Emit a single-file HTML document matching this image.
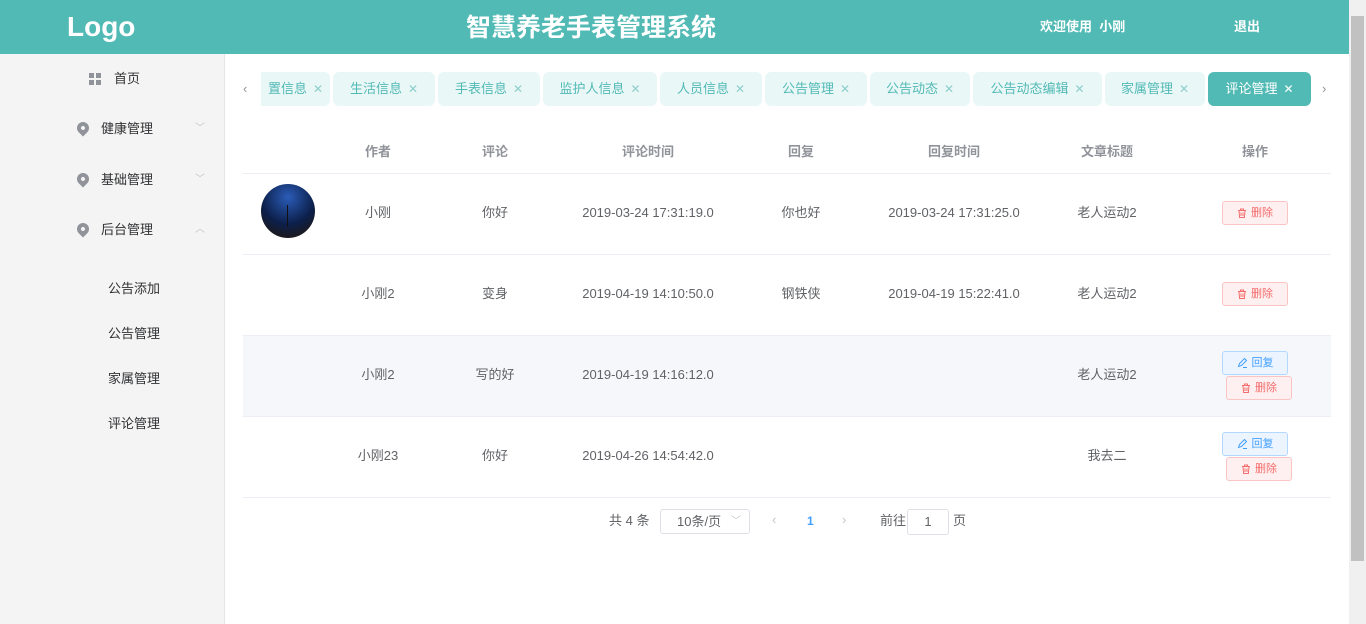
<!DOCTYPE html>
<html><head><meta charset="utf-8"><style>
*{margin:0;padding:0;box-sizing:border-box}
body{width:1366px;height:624px;overflow:hidden;font-family:"Liberation Sans","Noto Sans CJK SC",sans-serif;font-size:13px;line-height:16px;color:#606266;background:#fff;position:relative}
.hdr{position:absolute;left:0;top:0;width:1349px;height:54px;background:#52bab5;color:#fff}
.hdr .logo{position:absolute;left:67px;top:10px;font-size:28px;line-height:34px;font-weight:bold}
.hdr .title{position:absolute;left:466px;top:12px;font-size:25px;line-height:32px;font-weight:bold}
.hdr .w{position:absolute;left:1040px;top:19px;font-size:13px;font-weight:bold}
.hdr .q{position:absolute;left:1234px;top:19px;font-size:13px;font-weight:bold}
.sb{position:absolute;right:0;top:0;width:17px;height:624px;background:#f0f0f0}
.sb div{position:absolute;left:2px;top:16px;width:13px;height:545px;background:#c1c1c1}
.side{position:absolute;left:0;top:54px;width:225px;height:570px;background:#f4f4f4;border-right:1px solid #e6e6e6;color:#303133;font-size:13px}
.side .it{position:absolute;font-size:13px}
.pin{position:absolute;width:12px;height:12px;border-radius:50% 50% 50% 0;transform:rotate(-45deg);background:#909399}
.pin:after{content:"";position:absolute;left:4px;top:4px;width:4px;height:4px;border-radius:50%;background:#f4f4f4}
.chev{position:absolute;color:#c0c4cc;font-size:10px}
.tab{position:absolute;top:72px;height:34px;background:#eaf7f7;border-radius:6px;color:#52bab5;font-size:13px;line-height:34px;text-align:center;white-space:nowrap;overflow:hidden}
.tab.a{background:#52bab5;color:#fff}
.x{font-size:12px;margin-left:6px;color:#8ccfcb}
.tab.a .x{color:#fff}
.c{position:absolute;text-align:center;transform:translateX(-50%);white-space:nowrap;top:0}
.th{top:145px;font-weight:bold;color:#909399}
.line{position:absolute;left:243px;width:1088px;height:1px;background:#ebeef5}
.btn{position:absolute;height:24px;border-radius:3px;font-size:11px;line-height:22px;text-align:center;display:flex;align-items:center;justify-content:center;gap:4px}
.del{background:#fef0f0;border:1px solid #fbc4c4;color:#f56c6c;width:66px}
.rep{background:#ecf5ff;border:1px solid #b3d8ff;color:#409eff;width:66px}
</style></head><body>
<div class="hdr"><div class="logo">Logo</div><div class="title">智慧养老手表管理系统</div><div class="w">欢迎使用&nbsp; 小刚</div><div class="q">退出</div></div>
<div class="sb"><div></div></div>
<div class="side">
<div style="position:absolute;left:89px;top:19px;width:12px;height:12px;display:grid;grid-template-columns:5px 5px;gap:2px"><i style="background:#909399"></i><i style="background:#909399"></i><i style="background:#909399"></i><i style="background:#909399"></i></div>
<div class="it" style="left:114px;top:17px">首页</div>
<div class="pin" style="left:77px;top:68px"></div><div class="it" style="left:101px;top:67px">健康管理</div><div class="chev" style="left:195px;top:67px">﹀</div>
<div class="pin" style="left:77px;top:119px"></div><div class="it" style="left:101px;top:118px">基础管理</div><div class="chev" style="left:195px;top:118px">﹀</div>
<div class="pin" style="left:77px;top:169px"></div><div class="it" style="left:101px;top:168px">后台管理</div><div class="chev" style="left:195px;top:168px">︿</div>
<div class="it" style="left:108px;top:227px">公告添加</div>
<div class="it" style="left:108px;top:272px">公告管理</div>
<div class="it" style="left:108px;top:317px">家属管理</div>
<div class="it" style="left:108px;top:362px">评论管理</div>
</div>
<div style="position:absolute;left:243px;top:81px;color:#909399;font-size:13px">‹</div>
<div style="position:absolute;left:1322px;top:81px;color:#909399;font-size:13px">›</div>
<div class="tab" style="left:261px;width:69px;border-radius:0 6px 6px 0">置信息<span class="x">✕</span></div>
<div class="tab" style="left:333px;width:102px">生活信息<span class="x">✕</span></div>
<div class="tab" style="left:438px;width:102px">手表信息<span class="x">✕</span></div>
<div class="tab" style="left:543px;width:114px">监护人信息<span class="x">✕</span></div>
<div class="tab" style="left:660px;width:102px">人员信息<span class="x">✕</span></div>
<div class="tab" style="left:765px;width:102px">公告管理<span class="x">✕</span></div>
<div class="tab" style="left:870px;width:100px">公告动态<span class="x">✕</span></div>
<div class="tab" style="left:973px;width:129px">公告动态编辑<span class="x">✕</span></div>
<div class="tab" style="left:1105px;width:100px">家属管理<span class="x">✕</span></div>
<div class="tab a" style="left:1208px;width:103px">评论管理<span class="x">✕</span></div>

<div class="c th" style="left:378px;top:144px">作者</div><div class="c th" style="left:495px;top:144px">评论</div><div class="c th" style="left:648px;top:144px">评论时间</div><div class="c th" style="left:801px;top:144px">回复</div><div class="c th" style="left:954px;top:144px">回复时间</div><div class="c th" style="left:1107px;top:144px">文章标题</div><div class="c th" style="left:1255px;top:144px">操作</div>
<div class="line" style="top:173px"></div>
<div style="position:absolute;left:243px;top:336px;width:1088px;height:80px;background:#f5f7fa"></div>
<div class="line" style="top:254px"></div><div class="line" style="top:335px"></div><div class="line" style="top:416px"></div><div class="line" style="top:497px"></div>
<div style="position:absolute;left:261px;top:184px;width:54px;height:54px;border-radius:50%;background:radial-gradient(circle at 50% 25%,#2b5cb8,#0c1f4a 55%,#1a1a22 80%,#4a3a22 100%)"></div>
<div style="position:absolute;left:287px;top:205px;width:1px;height:22px;background:#111"></div>

<div class="c" style="left:378px;top:205px">小刚</div><div class="c" style="left:495px;top:205px">你好</div><div class="c" style="left:648px;top:205px">2019-03-24 17:31:19.0</div><div class="c" style="left:801px;top:205px">你也好</div><div class="c" style="left:954px;top:205px">2019-03-24 17:31:25.0</div><div class="c" style="left:1107px;top:205px">老人运动2</div>
<div class="btn del" style="left:1222px;top:201px"><svg width="10" height="10" viewBox="0 0 10 10" fill="none" stroke="#f56c6c" stroke-width="1"><path d="M1 2.5h8M3.5 2.5V1h3v1.5M2 2.5l.6 7h4.8l.6-7M4 4.5v3.5M6 4.5v3.5"/></svg>删除</div>
<div class="c" style="left:378px;top:286px">小刚2</div><div class="c" style="left:495px;top:286px">变身</div><div class="c" style="left:648px;top:286px">2019-04-19 14:10:50.0</div><div class="c" style="left:801px;top:286px">钢铁侠</div><div class="c" style="left:954px;top:286px">2019-04-19 15:22:41.0</div><div class="c" style="left:1107px;top:286px">老人运动2</div>
<div class="btn del" style="left:1222px;top:282px"><svg width="10" height="10" viewBox="0 0 10 10" fill="none" stroke="#f56c6c" stroke-width="1"><path d="M1 2.5h8M3.5 2.5V1h3v1.5M2 2.5l.6 7h4.8l.6-7M4 4.5v3.5M6 4.5v3.5"/></svg>删除</div>
<div class="c" style="left:378px;top:367px">小刚2</div><div class="c" style="left:495px;top:367px">写的好</div><div class="c" style="left:648px;top:367px">2019-04-19 14:16:12.0</div><div class="c" style="left:1107px;top:367px">老人运动2</div>
<div class="btn rep" style="left:1222px;top:351px"><svg width="11" height="10" viewBox="0 0 11 10" fill="none" stroke="#409eff" stroke-width="1"><path d="M1.5 8.5l1-3 5-5 2 2-5 5-3 1zM6 9.5h4"/></svg>回复</div><div class="btn del" style="left:1226px;top:376px"><svg width="10" height="10" viewBox="0 0 10 10" fill="none" stroke="#f56c6c" stroke-width="1"><path d="M1 2.5h8M3.5 2.5V1h3v1.5M2 2.5l.6 7h4.8l.6-7M4 4.5v3.5M6 4.5v3.5"/></svg>删除</div>
<div class="c" style="left:378px;top:448px">小刚23</div><div class="c" style="left:495px;top:448px">你好</div><div class="c" style="left:648px;top:448px">2019-04-26 14:54:42.0</div><div class="c" style="left:1107px;top:448px">我去二</div>
<div class="btn rep" style="left:1222px;top:432px"><svg width="11" height="10" viewBox="0 0 11 10" fill="none" stroke="#409eff" stroke-width="1"><path d="M1.5 8.5l1-3 5-5 2 2-5 5-3 1zM6 9.5h4"/></svg>回复</div><div class="btn del" style="left:1226px;top:457px"><svg width="10" height="10" viewBox="0 0 10 10" fill="none" stroke="#f56c6c" stroke-width="1"><path d="M1 2.5h8M3.5 2.5V1h3v1.5M2 2.5l.6 7h4.8l.6-7M4 4.5v3.5M6 4.5v3.5"/></svg>删除</div>

<div style="position:absolute;left:609px;top:513px">共 4 条</div>
<div style="position:absolute;left:660px;top:509px;width:90px;height:25px;border:1px solid #dcdfe6;border-radius:3px;padding-left:16px;line-height:23px">10条/页<span style="position:absolute;right:8px;color:#c0c4cc;font-size:10px">﹀</span></div>
<div style="position:absolute;left:772px;top:512px;color:#c0c4cc">‹</div>
<div style="position:absolute;left:807px;top:513px;color:#409eff;font-weight:bold;font-size:12px">1</div>
<div style="position:absolute;left:842px;top:512px;color:#c0c4cc">›</div>
<div style="position:absolute;left:880px;top:513px">前往</div>
<div style="position:absolute;left:907px;top:509px;width:42px;height:26px;border:1px solid #dcdfe6;border-radius:3px;text-align:center;line-height:24px">1</div>
<div style="position:absolute;left:953px;top:513px">页</div>
</body></html>
